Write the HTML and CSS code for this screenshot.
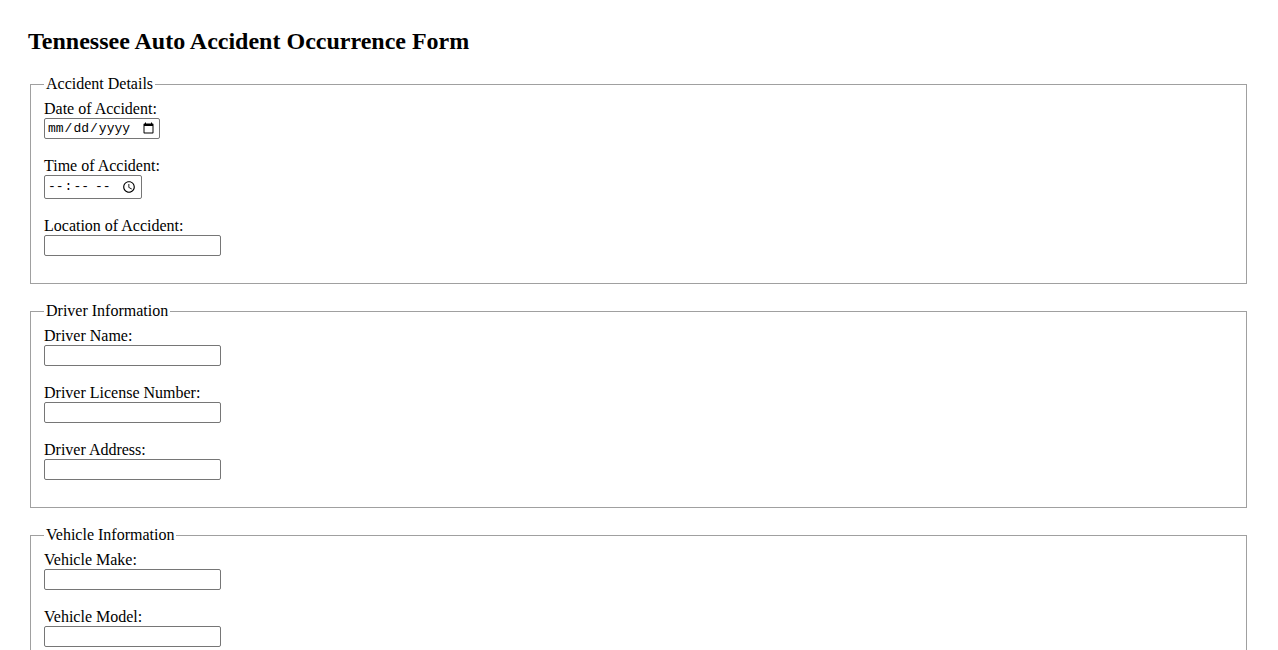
FILE: index.html
```html
<!DOCTYPE html>
<html>
<head>
<meta charset="utf-8">
<title>Tennessee Auto Accident Occurrence Form</title>
<link rel="stylesheet" href="styles.css">
</head>
<body>
<h2 class="title">Tennessee Auto Accident Occurrence Form</h2>
<form class="form">
  <fieldset class="group">
    <legend>Accident Details</legend>
    <div class="field"><label for="date">Date of Accident:</label><input class="in in-date" type="date" id="date"></div>
    <div class="field"><label for="time">Time of Accident:</label><input class="in in-time" type="time" id="time"></div>
    <div class="field"><label for="loc">Location of Accident:</label><input class="in in-text" type="text" id="loc"></div>
  </fieldset>
  <fieldset class="group">
    <legend>Driver Information</legend>
    <div class="field"><label for="dname">Driver Name:</label><input class="in in-text" type="text" id="dname"></div>
    <div class="field"><label for="dlic">Driver License Number:</label><input class="in in-text" type="text" id="dlic"></div>
    <div class="field"><label for="daddr">Driver Address:</label><input class="in in-text" type="text" id="daddr"></div>
  </fieldset>
  <fieldset class="group">
    <legend>Vehicle Information</legend>
    <div class="field"><label for="vmake">Vehicle Make:</label><input class="in in-text" type="text" id="vmake"></div>
    <div class="field"><label for="vmodel">Vehicle Model:</label><input class="in in-text" type="text" id="vmodel"></div>
    <div class="field"><label for="vyear">Vehicle Year:</label><input class="in in-text" type="text" id="vyear"></div>
  </fieldset>
</form>
</body>
</html>
```
FILE: styles.css
```css
body {
  margin: 8px;
  padding: 20px 21px 20px 20px;
  font-family: "Liberation Serif", "Times New Roman", serif;
  font-size: 16px;
  color: #000;
  background: #fff;
}
.title {
  font-size: 24px;
  font-weight: bold;
  margin: 0 0 20px;
}
.group {
  margin: 0 2px 18px;
  border: 1px solid #a0a0a0;
  padding: 7px 13px 9px;
}
.group legend {
  padding: 0 2px;
  line-height: 18px;
}
.field {
  margin-bottom: 18px;
}
.field label {
  display: block;
  line-height: 18px;
}
.in {
  display: block;
  box-sizing: border-box;
  margin: 0;
  border: 1px solid #767676;
  border-radius: 2px;
  font-size: 13.333px;
}
.in-text {
  width: 177px;
  height: 21px;
}
.in-date {
  width: 116px;
  height: 21px;
  padding: 0 2px;
  font: 13px "Liberation Mono", monospace;
}
.in-time {
  width: 98px;
  height: 24px;
  padding: 0 2px;
  font: 13px "Liberation Mono", monospace;
}
```
